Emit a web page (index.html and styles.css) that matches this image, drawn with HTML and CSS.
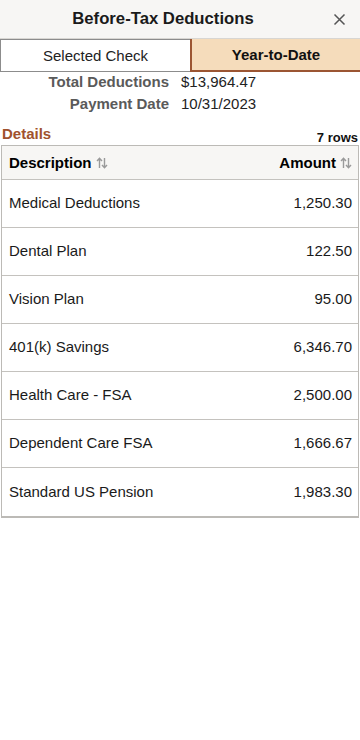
FILE: index.html
```html
<!DOCTYPE html>
<html>
<head>
<meta charset="utf-8">
<link rel="stylesheet" href="styles.css">
</head>
<body>
<div class="page">
  <header class="topbar">
    <h1 class="title">Before-Tax Deductions</h1>
    <span class="close">
      <svg width="13" height="13" viewBox="0 0 13 13"><path d="M1.5 1.5 L11.5 11.5 M11.5 1.5 L1.5 11.5" stroke="#555" stroke-width="1.5" fill="none"/></svg>
    </span>
  </header>
  <div class="tabs">
    <div class="tab tab-off">Selected Check</div>
    <div class="tab tab-on">Year-to-Date</div>
  </div>
  <div class="summary">
    <div class="srow"><span class="slabel">Total Deductions</span><span class="sval">$13,964.47</span></div>
    <div class="srow"><span class="slabel">Payment Date</span><span class="sval">10/31/2023</span></div>
  </div>
  <div class="details-head">
    <span class="details">Details</span>
    <span class="rows">7 rows</span>
  </div>
  <div class="grid">
    <div class="ghead">
      <span class="hcell">Description <svg class="sort" width="12" height="12" viewBox="0 0 12 12"><path d="M3.5 11 V1.5 M1 4 L3.5 1.3 L6 4 M8.5 1 V10.5 M6 8 L8.5 10.7 L11 8" stroke="#9a9a9a" stroke-width="1.4" fill="none"/></svg></span>
      <span class="hcell">Amount <svg class="sort" width="12" height="12" viewBox="0 0 12 12"><path d="M3.5 11 V1.5 M1 4 L3.5 1.3 L6 4 M8.5 1 V10.5 M6 8 L8.5 10.7 L11 8" stroke="#9a9a9a" stroke-width="1.4" fill="none"/></svg></span>
    </div>
    <div class="grow"><span>Medical Deductions</span><span>1,250.30</span></div>
    <div class="grow"><span>Dental Plan</span><span>122.50</span></div>
    <div class="grow"><span>Vision Plan</span><span>95.00</span></div>
    <div class="grow"><span>401(k) Savings</span><span>6,346.70</span></div>
    <div class="grow"><span>Health Care - FSA</span><span>2,500.00</span></div>
    <div class="grow"><span>Dependent Care FSA</span><span>1,666.67</span></div>
    <div class="grow"><span>Standard US Pension</span><span>1,983.30</span></div>
  </div>
</div>
</body>
</html>
```

FILE: styles.css
```css
* { box-sizing: border-box; }
html, body { margin: 0; padding: 0; background: #fff; }
body { font-family: "Liberation Sans", Arial, sans-serif; color: #000; }
.page { width: 360px; }
.topbar {
  height: 39px;
  background: #f7f6f4;
  border-bottom: 1px solid #d8d6d2;
  display: flex;
  align-items: center;
  justify-content: center;
  padding-right: 34px;
  position: relative;
}
.title { margin: 0; font-size: 16.7px; font-weight: bold; color: #1a1a1a; }
.close { position: absolute; right: 14px; top: 13px; display: flex; }
.tabs { display: flex; height: 33px; }
.tab { display: flex; align-items: center; justify-content: center; font-size: 15px; }
.tab-off {
  width: 190px;
  background: #fff;
  border: 1px solid #8c8c8c;
  border-right: none;
  color: #222;
}
.tab-on {
  flex: 1;
  background: #f5dcbb;
  border-left: 2px solid #9b5532;
  border-bottom: 2px solid #9b5532;
  font-weight: bold;
  color: #111;
}
.summary { margin-top: -2px; }
.srow { display: flex; height: 22px; align-items: center; font-size: 15px; }
.slabel { width: 169px; text-align: right; font-weight: bold; color: #5a5a5a; }
.sval { margin-left: 12px; color: #222; }
.details-head { display: flex; justify-content: space-between; align-items: flex-end; padding: 0 2px; height: 31px; }
.details { font-size: 15px; font-weight: bold; color: #a0522d; line-height: 18px; position: relative; top: -2px; }
.rows { font-size: 13px; font-weight: bold; color: #111; line-height: 16px; margin-bottom: -1px; }
.grid { margin: 0 1px; border: 1px solid #bcbab6; border-bottom-width: 2px; }
.ghead {
  height: 34px;
  background: #f7f6f4;
  border-bottom: 1px solid #c4c2be;
  display: flex; align-items: center; justify-content: space-between;
  padding: 0 6px 0 7px;
  font-size: 15px; font-weight: bold;
}
.hcell { display: flex; align-items: center; gap: 4px; }
.sort { display: block; }
.grow {
  height: 48px;
  border-bottom: 1px solid #c4c2be;
  display: flex; align-items: center; justify-content: space-between;
  padding: 0 6px 2px 7px;
  font-size: 15px; color: #1a1a1a;
}
.grow:last-child { border-bottom: none; }
```
